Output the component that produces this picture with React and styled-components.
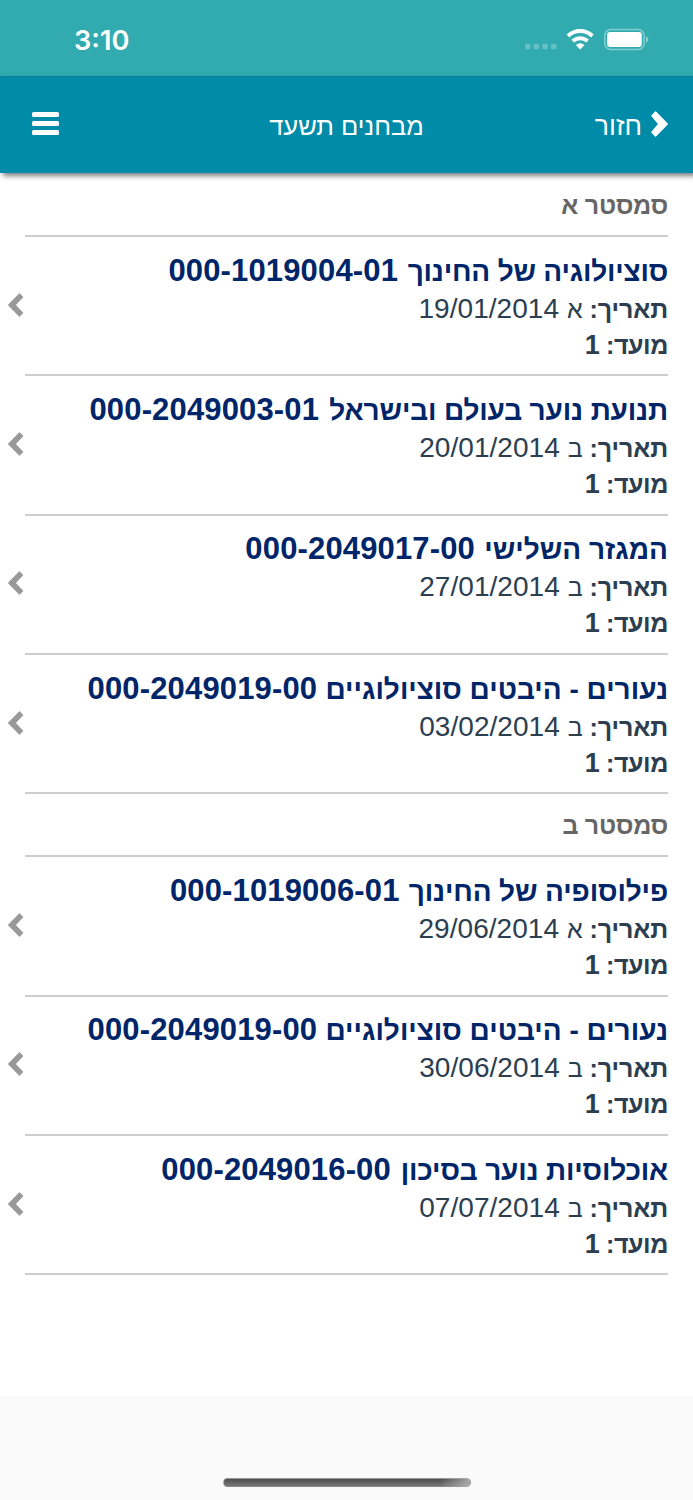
import React from "react";
import styled, { createGlobalStyle } from "styled-components";

const Global = createGlobalStyle`
  * { box-sizing: border-box; }
  body { margin: 0; background: #fff; }
`;

const Screen = styled.div`
  width: 693px;
  height: 1500px;
  display: flex;
  flex-direction: column;
  background: #fff;
  overflow: hidden;
  font-family: "Liberation Sans", Arial, sans-serif;
`;

const StatusBar = styled.div`
  height: 76px;
  flex: none;
  display: flex;
  align-items: center;
  justify-content: space-between;
  padding: 3px 43px 0 74px;
  background: #31abb0;
`;

const Clock = styled.span`
  font: 600 27.2px/32px Inter, sans-serif;
  padding-top: 2px;
  color: #fff;
`;

const StatusIcons = styled.svg`
  display: block;
  width: 126px;
  height: 24px;
`;

const NavBar = styled.header`
  height: 97.4px;
  flex: none;
  display: grid;
  grid-template-columns: 1fr auto 1fr;
  align-items: center;
  padding: 0 25px;
  background: #008ca8;
  border-top: 1px solid #0c8195;
  box-shadow: 3px 3px 5px rgba(0, 0, 0, 0.5);
  color: #fff;
  position: relative;
`;

const MenuButton = styled.button`
  display: flex;
  flex-direction: column;
  gap: 4px;
  width: 27px;
  padding: 0;
  margin: -3px 0 0 7px;
  border: 0;
  background: none;
`;

const MenuLine = styled.span`
  height: 5px;
  border-radius: 1.5px;
  background: #fff;
`;

const NavText = styled.span`
  font-size: ${(p) => p.$size}px;
  line-height: 32px;
  padding-top: 1px;
`;

const BackButton = styled.div`
  display: flex;
  direction: rtl;
  align-items: center;
  gap: 9px;
`;

const BackIcon = styled.svg`
  width: 17px;
  height: 26px;
  margin-top: -3px;
`;

const List = styled.main`
  flex: 1;
  direction: rtl;
  padding: 0.6px 25px 0;
`;

const SectionTitle = styled.h2`
  margin: 0;
  height: 63px;
  padding-top: 15px;
  border-bottom: 2px solid #cdcdcd;
  font-size: 25px;
  letter-spacing: -0.25px;
  line-height: 32px;
  font-weight: 700;
  color: #666;
`;

const Exam = styled.article`
  height: 139.33px;
  padding-top: 14.7px;
  border-bottom: 2px solid #cdcdcd;
  display: flex;
  justify-content: space-between;
  white-space: nowrap;
`;

const Title = styled.h3`
  margin: 0;
  font-size: 28px;
  letter-spacing: ${(p) => p.$spacing}px;
  line-height: 38px;
  font-weight: 700;
  color: #002569;
`;

const Code = styled.bdi`
  font-size: 31px;
  letter-spacing: 0.15px;
  margin-right: ${(p) => p.$gap}px;
`;

const Detail = styled.p`
  margin: 0;
  font-size: 25px;
  letter-spacing: -0.1px;
  line-height: 36px;
  color: #2c3e50;
`;

const Digits = styled.bdi`
  font-size: 28px;
  letter-spacing: 0.05px;
  margin-right: 1px;
`;

const Attempt = styled.b`
  letter-spacing: -0.4px;
`;

const AttemptNumber = styled.bdi`
  font-size: 27px;
`;

const Arrow = styled.svg`
  display: block;
  flex: none;
  width: 16px;
  height: 24px;
  margin: 41px 0 0 -17px;
`;

const Footer = styled.footer`
  height: 104px;
  flex: none;
  display: flex;
  align-items: flex-end;
  justify-content: center;
  padding-bottom: 13px;
  background: #fafafa;
`;

const HomeIndicator = styled.div`
  width: 248px;
  height: 9px;
  border-radius: 5px;
  border: 1px solid rgba(170, 170, 170, 0.6);
  background: linear-gradient(100deg, transparent 88%, rgba(190, 190, 190, 0.8)),
    linear-gradient(#4d504e, #777);
`;

const semesters = [
  {
    name: "סמסטר א",
    exams: [
      { name: "סוציולוגיה של החינוך", code: "000-1019004-01", day: "א", date: "19/01/2014", spacing: -0.2, gap: 2 },
      { name: "תנועת נוער בעולם ובישראל", code: "000-2049003-01", day: "ב", date: "20/01/2014", spacing: -0.14, gap: 2.5 },
      { name: "המגזר השלישי", code: "000-2049017-00", day: "ב", date: "27/01/2014", spacing: 0, gap: 1.5 },
      { name: "נעורים - היבטים סוציולוגיים", code: "000-2049019-00", day: "ב", date: "03/02/2014", spacing: 0, gap: 0.5 },
    ],
  },
  {
    name: "סמסטר ב",
    exams: [
      { name: "פילוסופיה של החינוך", code: "000-1019006-01", day: "א", date: "29/06/2014", spacing: -0.14, gap: 1.5 },
      { name: "נעורים - היבטים סוציולוגיים", code: "000-2049019-00", day: "ב", date: "30/06/2014", spacing: 0, gap: 0.5 },
      { name: "אוכלוסיות נוער בסיכון", code: "000-2049016-00", day: "ב", date: "07/07/2014", spacing: -0.17, gap: 2.3 },
    ],
  },
];

function ExamRow({ name, code, day, date, spacing, gap }) {
  return (
    <Exam>
      <div>
        <Title $spacing={spacing}>
          {name} <Code dir="ltr" $gap={gap}>{code}</Code>
        </Title>
        <Detail>
          <b>תאריך:</b> {day} <Digits dir="ltr">{date}</Digits>
        </Detail>
        <Detail>
          <Attempt>
            מועד: <AttemptNumber>1</AttemptNumber>
          </Attempt>
        </Detail>
      </div>
      <Arrow viewBox="0 0 16 24">
        <path
          d="M0.7 12 L11.5 1 L14.6 4.1 L7 12 L14.6 19.9 L11.5 23 Z"
          fill="#999"
          stroke="#999"
          strokeWidth="1.2"
          strokeLinejoin="round"
        />
      </Arrow>
    </Exam>
  );
}

export default function App() {
  return (
    <Screen>
      <Global />
      <StatusBar>
        <Clock>3:10</Clock>
        <StatusIcons viewBox="524 27 126 24">
          <g fill="#fff" fillOpacity="0.25">
            <rect x="525" y="42.8" width="5.5" height="5.5" rx="1.4" />
            <rect x="533.7" y="42.8" width="5.5" height="5.5" rx="1.4" />
            <rect x="542.3" y="42.8" width="5.5" height="5.5" rx="1.4" />
            <rect x="551" y="42.8" width="5.5" height="5.5" rx="1.4" />
          </g>
          <g fill="none" stroke="#fff" strokeWidth="3.9">
            <path d="M568 35 A17.5 17.5 0 0 1 592.4 35" />
            <path d="M572.8 40.2 A10.6 10.6 0 0 1 587.6 40.2" />
          </g>
          <path d="M580.2 48.5 L575.8 44 Q580.2 40.3 584.6 44 Z" fill="#fff" />
          <rect x="604.8" y="28.6" width="39.3" height="19.8" rx="6" fill="none" stroke="#fff" strokeOpacity="0.4" strokeWidth="1.5" />
          <rect x="607.1" y="31" width="34.7" height="15" rx="3" fill="#fff" />
          <path d="M645.9 35.3 Q648.3 36.3 648.3 38.5 Q648.3 40.7 645.9 41.7 Z" fill="#fff" fillOpacity="0.45" />
        </StatusIcons>
      </StatusBar>
      <NavBar>
        <MenuButton aria-label="תפריט">
          <MenuLine />
          <MenuLine />
          <MenuLine />
        </MenuButton>
        <NavText dir="rtl" $size={25.5}>מבחנים תשעד</NavText>
        <BackButton>
          <BackIcon viewBox="0 0 17 26">
            <path
              d="M16.2 13 L4.6 1 L1 4.8 L7.8 13 L1 21.2 L4.6 25 Z"
              fill="#fff"
              stroke="#fff"
              strokeWidth="1.4"
              strokeLinejoin="round"
            />
          </BackIcon>
          <NavText $size={26.6}>חזור</NavText>
        </BackButton>
      </NavBar>
      <List>
        {semesters.map((s) => (
          <section key={s.name}>
            <SectionTitle>{s.name}</SectionTitle>
            {s.exams.map((exam) => (
              <ExamRow key={exam.date} {...exam} />
            ))}
          </section>
        ))}
      </List>
      <Footer>
        <HomeIndicator />
      </Footer>
    </Screen>
  );
}
